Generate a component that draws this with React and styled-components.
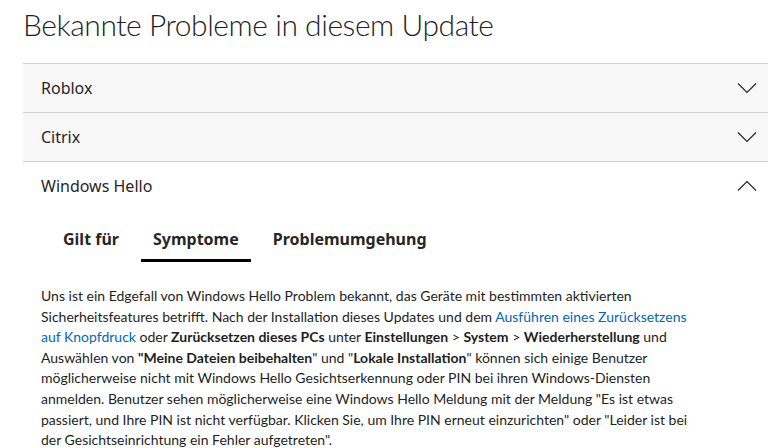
import React, { useState } from "react";
import styled, { createGlobalStyle } from "styled-components";

const GlobalStyle = createGlobalStyle`
  body {
    margin: 0;
    background: #ffffff;
    font-family: "Segoe UI", Lato, "Noto Sans", sans-serif;
    color: #262626;
  }
`;

const Page = styled.div`
  padding: 0 0 0 23px;
  overflow: hidden;
  height: 448px;
`;

const Title = styled.h2`
  margin: 0;
  padding-top: 4px;
  font-family: "Segoe UI", Lato, sans-serif;
  font-weight: 300;
  font-size: 30px;
  line-height: 40px;
  letter-spacing: -0.45px;
  color: #1f1f1f;
  height: 59px;
`;

const Accordion = styled.div`
  border-top: 1px solid #d2d2d2;
`;

const Header = styled.button`
  display: flex;
  align-items: center;
  justify-content: space-between;
  height: 48px;
  width: calc(100% - 29px);
  padding: 0 11px 0 18px;
  border: none;
  border-bottom: ${(p) => (p.$open ? "none" : "1px solid #d2d2d2")};
  background: ${(p) => (p.$open ? "#ffffff" : "#f8f8f8")};
  box-sizing: content-box;
  font-family: "Segoe UI", "Noto Sans", sans-serif;
  font-size: 16px;
  color: #262626;
  text-align: left;
  cursor: pointer;
`;

const Chevron = ({ up }) => (
  <svg width="20" height="12" viewBox="0 0 20 12">
    <polyline
      points={up ? "1,10.5 10,1.5 19,10.5" : "1,1.5 10,10.5 19,1.5"}
      fill="none"
      stroke="#262626"
      strokeWidth="1.2"
    />
  </svg>
);

const Panel = styled.div`
  padding: 0 0 0 18px;
`;

const TabList = styled.div`
  display: flex;
  gap: 10px;
  margin: 8px 0 0 10px;
`;

const Tab = styled.button`
  padding: 10px 12px 9px;
  border: none;
  background: none;
  border-bottom: 3px solid ${(p) => (p.$active ? "#000000" : "transparent")};
  font-family: "Segoe UI", "Noto Sans", sans-serif;
  font-weight: 700;
  font-size: 16px;
  line-height: 22px;
  color: #262626;
  cursor: pointer;
`;

const Body = styled.p`
  margin: 24px 0 0;
  font-family: "Segoe UI", Lato, sans-serif;
  font-size: 14px;
  line-height: 20.6px;
  color: #1e1e1e;
  white-space: nowrap;
`;

const Link = styled.a`
  color: #0067b8;
  text-decoration: none;
`;

const items = ["Roblox", "Citrix", "Windows Hello"];
const tabs = ["Gilt für", "Symptome", "Problemumgehung"];

export default function App() {
  const [open, setOpen] = useState("Windows Hello");
  const [tab, setTab] = useState("Symptome");
  return (
    <>
      <GlobalStyle />
      <Page>
        <Title>Bekannte Probleme in diesem Update</Title>
        <Accordion>
          {items.map((name) => (
            <div key={name}>
              <Header
                $open={open === name}
                onClick={() => setOpen(open === name ? "" : name)}
              >
                {name}
                <Chevron up={open === name} />
              </Header>
              {open === name && (
                <Panel>
                  <TabList>
                    {tabs.map((t) => (
                      <Tab key={t} $active={tab === t} onClick={() => setTab(t)}>
                        {t}
                      </Tab>
                    ))}
                  </TabList>
                  <Body>
                    Uns ist ein Edgefall von Windows Hello Problem bekannt, das Geräte mit bestimmten aktivierten
                    <br />
                    Sicherheitsfeatures betrifft. Nach der Installation dieses Updates und dem{" "}
                    <Link href="#">Ausführen eines Zurücksetzens</Link>
                    <br />
                    <Link href="#">auf Knopfdruck</Link> oder <b>Zurücksetzen dieses PCs</b> unter{" "}
                    <b>Einstellungen</b> &gt; <b>System</b> &gt; <b>Wiederherstellung</b> und
                    <br />
                    Auswählen von <b>"Meine Dateien beibehalten</b>" und "<b>Lokale Installation</b>" können sich einige Benutzer
                    <br />
                    möglicherweise nicht mit Windows Hello Gesichtserkennung oder PIN bei ihren Windows-Diensten
                    <br />
                    anmelden. Benutzer sehen möglicherweise eine Windows Hello Meldung mit der Meldung "Es ist etwas
                    <br />
                    passiert, und Ihre PIN ist nicht verfügbar. Klicken Sie, um Ihre PIN erneut einzurichten" oder "Leider ist bei
                    <br />
                    der Gesichtseinrichtung ein Fehler aufgetreten".
                  </Body>
                </Panel>
              )}
            </div>
          ))}
        </Accordion>
      </Page>
    </>
  );
}
